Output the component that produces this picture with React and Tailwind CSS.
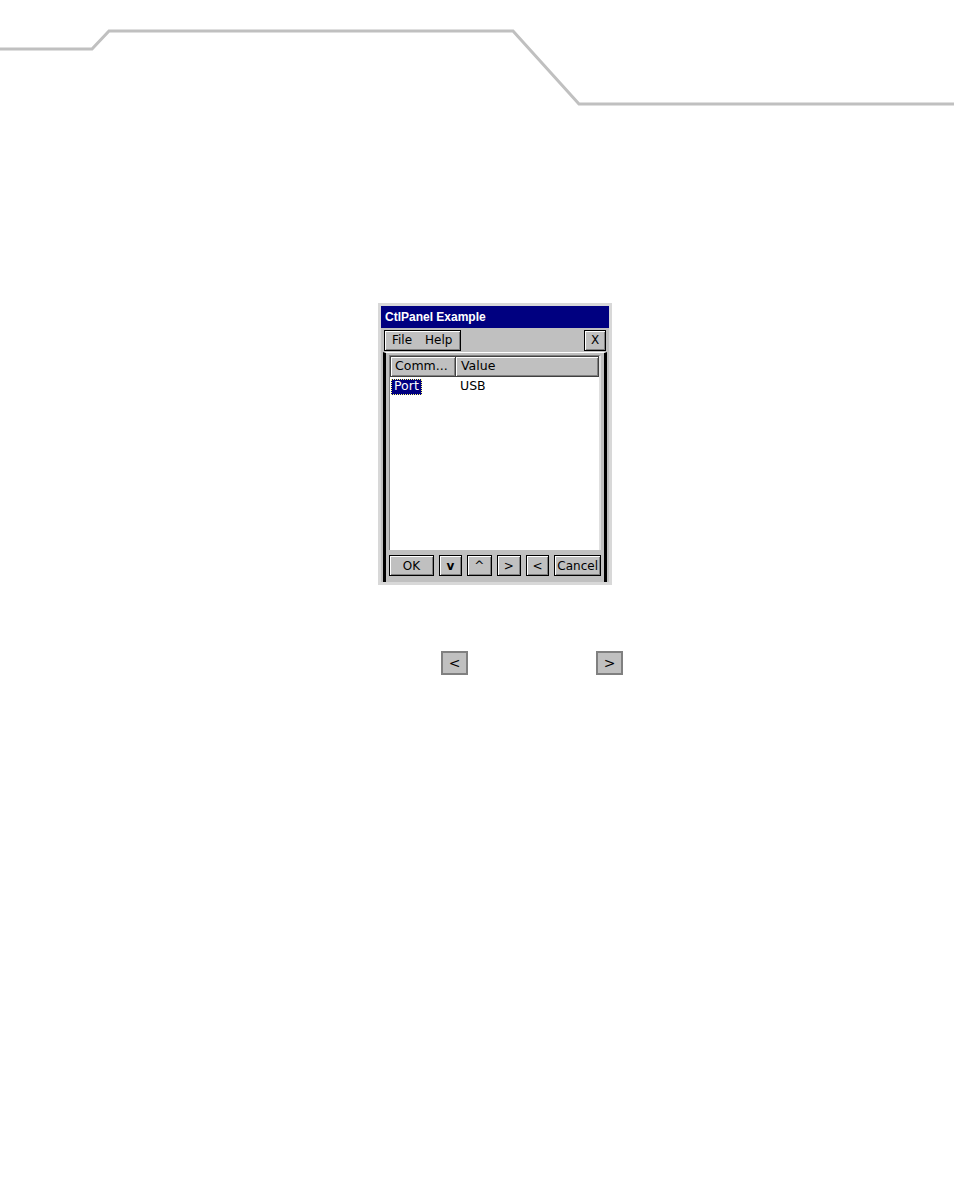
import React from 'react';

const font = { fontFamily: 'Tahoma, "DejaVu Sans", sans-serif' };

const Btn = ({ children, className = '' }) => (
    <div
        className={`h-[21px] flex items-center justify-center bg-[#c0c0c0] border border-[#000] shadow-[inset_1px_1px_0_#fff,inset_-1px_-1px_0_#808080] text-[12px] text-black ${className}`}
    >
        {children}
    </div>
);

const Window = () => (
    <div className="w-[234px] h-[282px] bg-[#c0c0c0] border-[3px] border-[#d8d8d8] flex flex-col" style={font}>
        <div
            className="h-[22px] bg-[#000080] text-white text-[12px] font-bold flex items-center pl-[4px] shrink-0"
            style={{ fontFamily: '"Liberation Sans", Arial, sans-serif' }}
        >
            CtlPanel Example
        </div>
        <div className="h-[24px] flex items-center justify-between px-[3px] shrink-0">
            <div className="h-[21px] w-[77px] border border-[#000] shadow-[inset_1px_1px_0_#fff,inset_-1px_-1px_0_#808080] flex items-center gap-[13px] pl-[7px] text-[12px]">
                <span>File</span>
                <span>Help</span>
            </div>
            <Btn className="w-[22px]">X</Btn>
        </div>
        <div className="flex-1 flex flex-col border-l-[3px] border-r-[3px] border-l-[#000] border-r-[#000] border-t border-t-[#fff] mx-[2px] px-[3px] pt-[2px]">
            <div className="flex-1 bg-white border-l border-t border-[#808080] border-r-[2px] border-r-[#e0e0e0] flex flex-col">
                <div className="flex h-[21px] text-[12.5px]">
                    <div className="w-[66px] bg-[#c0c0c0] border border-[#404040] shadow-[inset_1px_1px_0_#fff,inset_-1px_-1px_0_#808080] flex items-center pl-[4px]">
                        Comm...
                    </div>
                    <div className="flex-1 bg-[#c0c0c0] border border-l-0 border-[#404040] shadow-[inset_1px_1px_0_#fff,inset_-1px_-1px_0_#808080] flex items-center pl-[5px]">
                        Value
                    </div>
                </div>
                <div className="flex items-center h-[17px] text-[12.5px] mt-[1px]">
                    <div className="w-[66px] pl-[1px]">
                        <span className="inline-flex items-center h-[16px] bg-[#000080] text-white px-[2px] border border-dotted border-[#ffff80]">
                            Port
                        </span>
                    </div>
                    <span className="pl-[4px]">USB</span>
                </div>
            </div>
            <div className="h-[32px] flex items-start pt-[5px] gap-[5px] shrink-0">
                <Btn className="w-[46px]">OK</Btn>
                <Btn className="w-[24px] font-bold">v</Btn>
                <Btn className="w-[25px]">^</Btn>
                <Btn className="w-[25px]">&gt;</Btn>
                <Btn className="w-[24px]">&lt;</Btn>
                <Btn className="w-[48px]">Cancel</Btn>
            </div>
        </div>
    </div>
);

const SmallBtn = ({ children }) => (
    <div className="w-[27px] h-[24px] bg-[#c0c0c0] border-[2px] border-[#808080] flex items-center justify-center text-[14px] text-black" style={font}>
        {children}
    </div>
);

export default function App() {
    return (
        <div className="w-[954px] h-[1201px] bg-white">
            <svg width="954" height="110" className="block">
                <polyline
                    points="0,49 92,49 109,31 513,31 579,104 954,104"
                    fill="none"
                    stroke="#c0c0c0"
                    strokeWidth="3"
                />
            </svg>
            <div className="ml-[378px] mt-[193px]">
                <Window />
            </div>
            <div className="flex mt-[66px] ml-[441px] gap-[128px]">
                <SmallBtn>&lt;</SmallBtn>
                <SmallBtn>&gt;</SmallBtn>
            </div>
        </div>
    );
}
